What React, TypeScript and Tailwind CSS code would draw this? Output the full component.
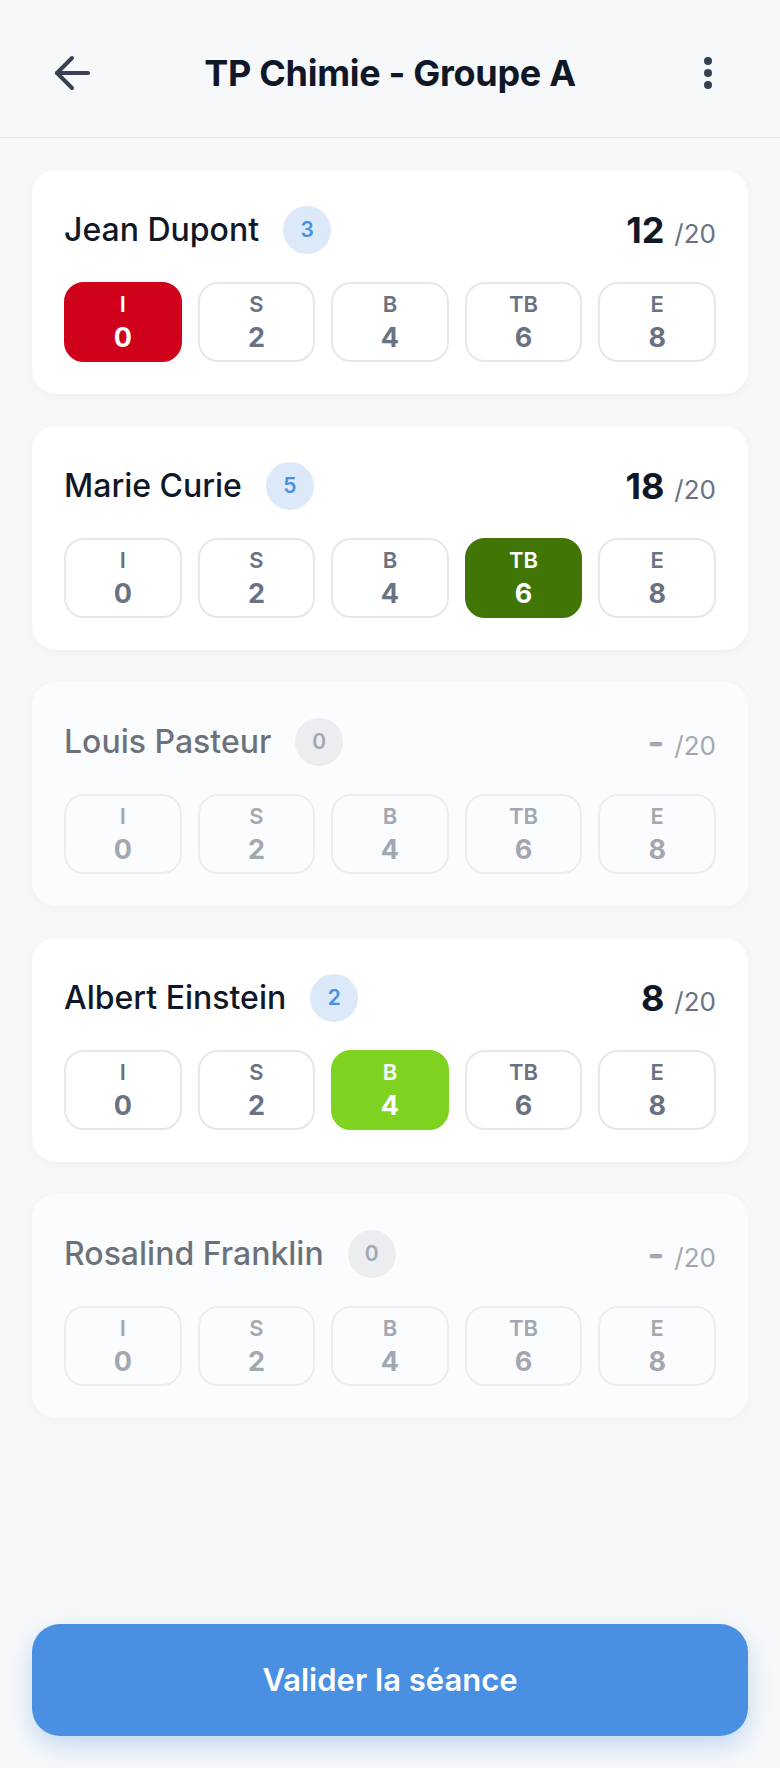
import React from 'react';

type Grade = { label: string; value: number };

const grades: Grade[] = [
  { label: 'I', value: 0 },
  { label: 'S', value: 2 },
  { label: 'B', value: 4 },
  { label: 'TB', value: 6 },
  { label: 'E', value: 8 },
];

const selectedClass: Record<string, string> = {
  I: 'bg-[#D0021B] border-[#D0021B] text-white',
  TB: 'bg-[#417505] border-[#417505] text-white',
  B: 'bg-[#7ED321] border-[#7ED321] text-white',
};

const students = [
  { name: 'Jean Dupont', count: 3, score: '12', selected: 'I' },
  { name: 'Marie Curie', count: 5, score: '18', selected: 'TB' },
  { name: 'Louis Pasteur', count: 0, score: null, selected: null },
  { name: 'Albert Einstein', count: 2, score: '8', selected: 'B' },
  { name: 'Rosalind Franklin', count: 0, score: null, selected: null },
];

function StudentCard({ name, count, score, selected }: (typeof students)[number]) {
  const empty = score === null;
  return (
    <div
      className={`rounded-3xl bg-white px-8 pt-8 pb-8 shadow-[0_2px_10px_rgba(15,23,42,0.04)] ${
        empty ? 'opacity-60' : ''
      }`}
    >
      <div className="flex h-14 items-center justify-between">
        <div className="flex items-center gap-6">
          <span className="text-[32px] font-medium text-gray-900">{name}</span>
          <span
            className={`flex h-12 w-12 items-center justify-center rounded-full text-[21px] font-semibold ${
              count > 0 ? 'bg-[#4A90E2]/20 text-[#4A90E2]' : 'bg-gray-200 text-gray-500'
            }`}
          >
            {count}
          </span>
        </div>
        <div className="flex items-baseline gap-2.5">
          <span className={`text-[36px] font-bold ${empty ? 'text-gray-500' : 'text-gray-900'}`}>
            {empty ? '-' : score}
          </span>
          <span className="text-[26px] text-gray-500">/20</span>
        </div>
      </div>
      <div className="mt-6 grid grid-cols-5 gap-4">
        {grades.map((g) => {
          const isSel = selected === g.label;
          return (
            <button
              key={g.label}
              className={`flex h-20 flex-col items-center justify-center gap-[9px] rounded-[20px] border-2 leading-none ${
                isSel ? selectedClass[g.label] : 'border-gray-200 bg-white text-gray-500'
              }`}
            >
              <span className="text-[22px] font-semibold leading-none">{g.label}</span>
              <span className="text-[27px] font-bold leading-none">{g.value}</span>
            </button>
          );
        })}
      </div>
    </div>
  );
}

export default function App() {
  return (
    <div className="flex min-h-[1768px] flex-col bg-[#f7f8fa] font-['Inter',sans-serif]">
      <header className="flex h-[138px] items-center justify-between border-b border-gray-200 px-12 pt-2">
        <button className="flex h-12 w-12 items-center justify-center" aria-label="Retour">
          <svg width="36" height="36" viewBox="0 0 36 36" fill="none" stroke="#374151" strokeWidth="4" strokeLinecap="round" strokeLinejoin="round">
            <path d="M34 18H3" />
            <path d="M18 3 3 18l15 15" />
          </svg>
        </button>
        <h1 className="text-[36px] font-bold tracking-[-0.3px] text-gray-900">TP Chimie - Groupe A</h1>
        <button className="flex h-12 w-12 items-center justify-center" aria-label="Menu">
          <svg width="12" height="36" viewBox="0 0 12 36" fill="#374151">
            <circle cx="6" cy="6" r="4" />
            <circle cx="6" cy="18" r="4" />
            <circle cx="6" cy="30" r="4" />
          </svg>
        </button>
      </header>

      <main className="flex flex-1 flex-col gap-8 px-8 pt-8">
        {students.map((s) => (
          <StudentCard key={s.name} {...s} />
        ))}
      </main>

      <footer className="px-8 pb-8">
        <button className="flex h-28 w-full items-center justify-center rounded-[28px] bg-[#4A90E2] text-[31px] font-semibold text-white shadow-[0_10px_24px_rgba(74,144,226,0.3)]">
          Valider la séance
        </button>
      </footer>
    </div>
  );
}
